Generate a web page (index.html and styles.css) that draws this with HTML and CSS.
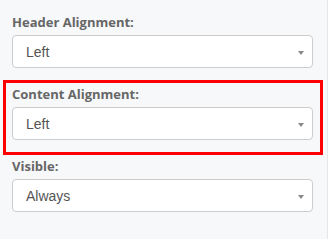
FILE: index.html
```html
<!DOCTYPE html>
<html lang="en">
<head>
  <meta charset="UTF-8">
  <title>Column settings</title>
  <link rel="stylesheet" href="styles.css">
</head>
<body>

  <div class="panel">

    <div class="field">
      <label class="field-label">Header Alignment:</label>
      <div class="select">
        <span>Left</span>
        <span class="caret"></span>
      </div>
    </div>

    <div class="field highlight">
      <label class="field-label">Content Alignment:</label>
      <div class="select">
        <span>Left</span>
        <span class="caret"></span>
      </div>
    </div>

    <div class="field last">
      <label class="field-label">Visible:</label>
      <div class="select">
        <span>Always</span>
        <span class="caret"></span>
      </div>
    </div>

  </div>

</body>
</html>
```

FILE: styles.css
```css
body {
  margin: 0;
  background: #fff;
  font-family: "Open Sans", sans-serif;
  color: #555;
}
.panel {
  width: 328px;
  height: 239px;
  padding: 8px 0 0 3px;
  box-sizing: border-box;
  background: #f7f8fa;
  border-right: 1px solid #e6e7ea;
}
.field {
  width: 320px;
  box-sizing: border-box;
  padding: 5px 10px 12px 9px;
}
.field.highlight {
  border: 3px solid #f00;
  padding: 2px 7px 12px 6px;
}
.field.last {
  padding-top: 2px;
}
.field-label {
  display: block;
  font-size: 13px;
  font-weight: bold;
  line-height: 18px;
  margin-bottom: 4px;
  color: #666;
}
.select {
  display: flex;
  align-items: center;
  justify-content: space-between;
  height: 33px;
  box-sizing: border-box;
  padding: 0 8px 0 13px;
  background: #fff;
  border: 1px solid #ccc;
  border-radius: 4px;
  font-family: "Liberation Sans", Arial, sans-serif;
  font-size: 14px;
  color: #555;
}
.caret {
  width: 0;
  height: 0;
  border-left: 3px solid transparent;
  border-right: 3px solid transparent;
  border-top: 4px solid #888;
  margin-top: 2px;
}
```
